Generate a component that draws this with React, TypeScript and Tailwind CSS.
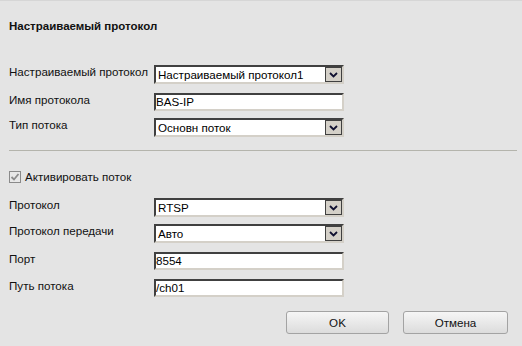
import React from 'react'

const font = { fontFamily: '"Liberation Sans", Arial, sans-serif' }

function Chevron() {
  return (
    <svg width="9" height="6" viewBox="0 0 9 6">
      <path d="M1 1 L4.5 4.5 L8 1" fill="none" stroke="#101030" strokeWidth="1.8" />
    </svg>
  )
}

function Select({ value }: { value: string }) {
  return (
    <div className="flex w-[190px] h-[19px] bg-white border-t-2 border-l-2 border-t-[#404040] border-l-[#404040] border-b-2 border-r-2 border-b-[#d4d0c8] border-r-[#d4d0c8]">
      <div className="flex-1 pl-[2px] text-[11.6px] leading-[15px] text-black">{value}</div>
      <div className="w-[17px] h-full bg-[#d4d0c8] border border-[#404040] flex items-center justify-center">
        <Chevron />
      </div>
    </div>
  )
}

function Input({ value }: { value: string }) {
  return (
    <div className="w-[190px] h-[18px] bg-white border-t-2 border-l-2 border-t-[#404040] border-l-[#404040] border-b-2 border-r-2 border-b-[#d4d0c8] border-r-[#d4d0c8] text-[11.6px] leading-[14px] text-black">
      {value}
    </div>
  )
}

function Row({ label, children, mt }: { label: string; children: React.ReactNode; mt: string }) {
  return (
    <div className={`flex items-start ${mt}`}>
      <div className="w-[145px] text-[11.6px] leading-[14px] text-[#111]">{label}</div>
      {children}
    </div>
  )
}

export default function App() {
  return (
    <div style={font} className="w-[522px] h-[346px] bg-[#e4e4e4] border-t border-[#d6d6d6] overflow-hidden">
      <div className="px-[9px] pt-[18px]">
        <h1 className="text-[11.5px] leading-[14px] font-bold text-[#111]">Настраиваемый протокол</h1>

        <Row label="Настраиваемый протокол" mt="mt-[32px]">
          <Select value="Настраиваемый протокол1" />
        </Row>
        <Row label="Имя протокола" mt="mt-[9px]">
          <Input value="BAS-IP" />
        </Row>
        <Row label="Тип потока" mt="mt-[7px]">
          <Select value="Основн поток" />
        </Row>

        <div className="mt-[13px] h-px bg-[#b4b4ac] mr-[-4px]" />

        <div className="flex items-center mt-[19px] gap-[4px]">
          <span className="w-[12px] h-[12px] border border-[#8a8a8a] bg-[#e8e8e8] flex items-center justify-center">
            <svg width="10" height="10" viewBox="0 0 10 10">
              <path d="M1.5 5 L4 7.5 L8.5 2" fill="none" stroke="#8c8c8c" strokeWidth="1.8" />
            </svg>
          </span>
          <span className="text-[11.6px] leading-[14px] text-[#111]">Активировать поток</span>
        </div>

        <Row label="Протокол" mt="mt-[14px]">
          <Select value="RTSP" />
        </Row>
        <Row label="Протокол передачи" mt="mt-[7px]">
          <Select value="Авто" />
        </Row>
        <Row label="Порт" mt="mt-[9px]">
          <Input value="8554" />
        </Row>
        <Row label="Путь потока" mt="mt-[9px]">
          <Input value="/ch01" />
        </Row>

        <div className="flex justify-end gap-[14px] mt-[14px] pr-[5px]">
          <button className="w-[103px] h-[23px] rounded-[3px] border border-[#a3a3a3] bg-gradient-to-b from-[#f6f6f6] to-[#dcdcdc] text-[11.6px] text-[#111]">
            OK
          </button>
          <button className="w-[105px] h-[23px] rounded-[3px] border border-[#a3a3a3] bg-gradient-to-b from-[#f6f6f6] to-[#dcdcdc] text-[11.6px] text-[#111]">
            Отмена
          </button>
        </div>
      </div>
    </div>
  )
}
